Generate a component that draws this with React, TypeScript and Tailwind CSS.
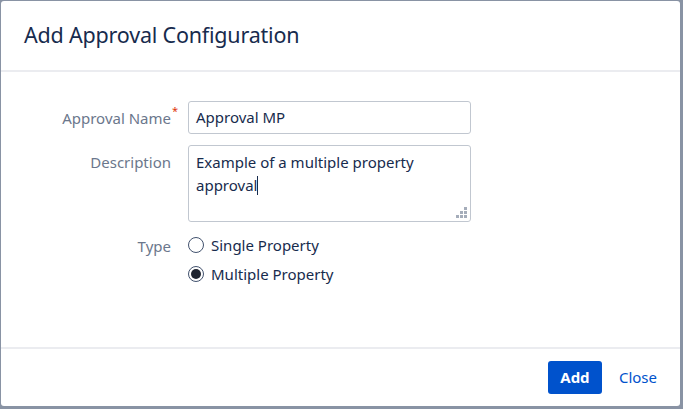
import React from "react";

export default function App() {
  return (
    <div className="w-[683px] h-[409px] bg-[#8993a4] pt-[1px] pl-[1px] pr-[3px] pb-[3px]" style={{ fontFamily: '"Noto Sans", "Open Sans", sans-serif' }}>
      <div className="w-full h-full bg-white rounded-[3px] flex flex-col overflow-hidden">
        <div className="h-[71px] shrink-0 flex items-center px-[23px] border-b-2 border-[#ebecf0]">
          <h1 className="text-[21.5px] text-[#172b4d] tracking-[-0.2px]">Add Approval Configuration</h1>
        </div>
        <div className="flex-1 pt-[29px]">
          <div className="flex items-start">
            <label className="relative w-[170px] text-right text-[15px] text-[#6b778c] pt-[6px] shrink-0">
              Approval Name<span className="absolute -right-[7px] top-[2px] text-[#de350b] text-[11px]">*</span>
            </label>
            <div className="ml-[17px] w-[283px] h-[33px] border border-[#c1c7d0] rounded-[3px] px-[7px] flex items-center text-[15px] text-[#172b4d]">
              Approval MP
            </div>
          </div>
          <div className="flex items-start mt-[11px]">
            <label className="w-[170px] text-right text-[15px] text-[#6b778c] pt-[6px] shrink-0">Description</label>
            <div className="ml-[17px] relative w-[283px] h-[77px] border border-[#c1c7d0] rounded-[3px] px-[7px] pt-[5px] text-[15px] leading-[23px] text-[#172b4d]">
              Example of a multiple property
              <br />
              approval<span className="inline-block w-[1px] h-[19px] bg-[#172b4d] align-middle -mt-[2px]"></span>
              <svg className="absolute right-[2px] bottom-[2px]" width="12" height="12" viewBox="0 0 12 12">
                <rect x="8" y="0" width="3" height="3" fill="#a5adba" />
                <rect x="4" y="4" width="3" height="3" fill="#a5adba" />
                <rect x="8" y="4" width="3" height="3" fill="#a5adba" />
                <rect x="0" y="8" width="3" height="3" fill="#a5adba" />
                <rect x="4" y="8" width="3" height="3" fill="#a5adba" />
                <rect x="8" y="8" width="3" height="3" fill="#a5adba" />
              </svg>
            </div>
          </div>
          <div className="flex items-start mt-[13px]">
            <label className="w-[170px] text-right text-[15px] text-[#6b778c] pt-[0px] shrink-0">Type</label>
            <div className="ml-[17px] flex flex-col gap-[9px]">
              <div className="flex items-center h-[20px]">
                <span className="w-[16px] h-[16px] rounded-full border border-[#42526e] bg-white"></span>
                <span className="ml-[7px] text-[15px] text-[#172b4d]">Single Property</span>
              </div>
              <div className="flex items-center h-[20px]">
                <span className="w-[16px] h-[16px] rounded-full border border-[#42526e] bg-white flex items-center justify-center">
                  <span className="w-[10px] h-[10px] rounded-full bg-[#1f2430]"></span>
                </span>
                <span className="ml-[7px] text-[15px] text-[#172b4d]">Multiple Property</span>
              </div>
            </div>
          </div>
        </div>
        <div className="h-[59px] shrink-0 border-t-2 border-[#ebecf0] flex items-center justify-end pr-[23px]">
          <button className="w-[54px] h-[33px] bg-[#0052cc] text-white text-[15px] font-bold rounded-[3px]">Add</button>
          <button className="ml-[17px] text-[15px] text-[#0052cc]">Close</button>
        </div>
      </div>
    </div>
  );
}
